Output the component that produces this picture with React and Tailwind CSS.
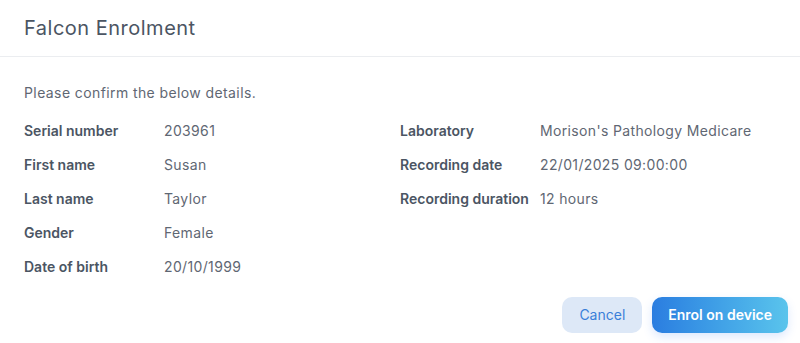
const left = [
  ["Serial number", "203961"],
  ["First name", "Susan"],
  ["Last name", "Taylor"],
  ["Gender", "Female"],
  ["Date of birth", "20/10/1999"],
];

const right = [
  ["Laboratory", "Morison's Pathology Medicare"],
  ["Recording date", "22/01/2025 09:00:00"],
  ["Recording duration", "12 hours"],
];

const DetailRow = ({ label, value }) => (
  <div className="flex h-[34px] items-center">
    <span className="w-[140px] shrink-0 font-semibold text-[#4b5563]">{label}</span>
    <span className="text-[#5f6773] tracking-[0.35px]">{value}</span>
  </div>
);

const App = () => {
  return (
    <div
      className="w-[800px] h-[343px] bg-white overflow-hidden"
      style={{ fontFamily: "Inter, 'Noto Sans', sans-serif" }}
    >
      <div className="h-[57px] flex items-center px-6 border-b border-[#ebedf0]">
        <h2 className="text-[20px] tracking-[0.5px] text-[#4b5563]">Falcon Enrolment</h2>
      </div>

      <div className="px-6 pt-[26px] text-sm">
        <p className="text-[#5f6773] leading-5 tracking-[0.4px]">Please confirm the below details.</p>
        <div className="mt-[11px] grid grid-cols-2">
          <div>
            {left.map(([l, v]) => (
              <DetailRow key={l} label={l} value={v} />
            ))}
          </div>
          <div>
            {right.map(([l, v]) => (
              <DetailRow key={l} label={l} value={v} />
            ))}
          </div>
        </div>
      </div>

      <div className="flex justify-end gap-[10px] pr-3 mt-[13px]">
        <button className="h-9 px-[17px] rounded-[10px] bg-[#dde8f7] text-[#3a7fd9] text-sm">
          Cancel
        </button>
        <button className="h-9 px-4 rounded-[10px] bg-gradient-to-r from-[#2b7de0] to-[#5ac4ec] text-white text-sm font-semibold shadow-[0_4px_10px_rgba(59,130,246,0.18)]">
          Enrol on device
        </button>
      </div>
    </div>
  );
};

export default App;
